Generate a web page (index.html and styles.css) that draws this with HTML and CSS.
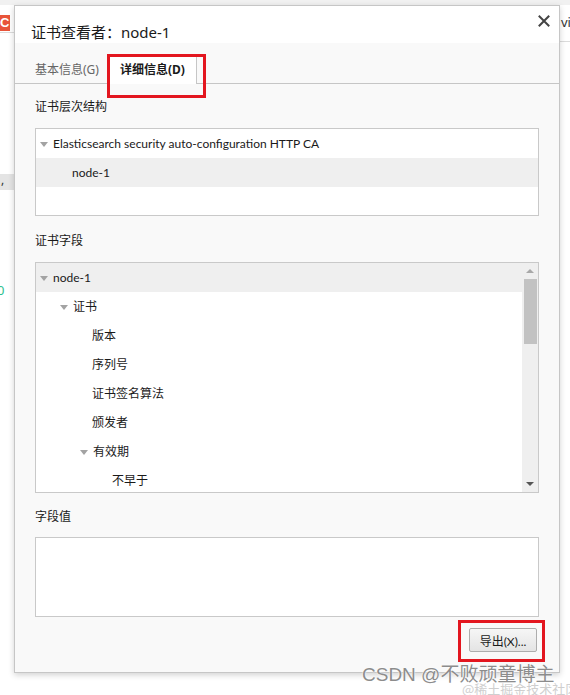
FILE: index.html
```html
<!DOCTYPE html>
<html lang="zh">
<head>
<meta charset="utf-8">
<title>证书查看者</title>
<link rel="stylesheet" href="styles.css">
</head>
<body>
<div class="backdrop">
  <div class="bg-top"></div>
  <div class="bg-logo">C</div>
  <div class="bg-line-left"></div>
  <div class="bg-line-right"></div>
  <div class="bg-vir">vir</div>
  <div class="bg-bar">,</div>
  <div class="bg-green">0</div>
</div>

<div class="dialog">
  <div class="header">
    <div class="title">证书查看者：node-1</div>
    <button class="close" aria-label="关闭">
      <svg width="12" height="12" viewBox="0 0 12 12"><path d="M1.5 1.5 L10.5 10.5 M10.5 1.5 L1.5 10.5" stroke="#444" stroke-width="2" stroke-linecap="square"/></svg>
    </button>
  </div>
  <div class="tabs">
    <div class="tab">基本信息(G)</div>
    <div class="tab active">详细信息(D)</div>
  </div>
  <div class="body">
    <div class="label">证书层次结构</div>
    <div class="box hierarchy">
      <div class="row"><span class="tri"></span>Elasticsearch security auto-configuration HTTP CA</div>
      <div class="row sel indent1">node-1</div>
    </div>

    <div class="label gap">证书字段</div>
    <div class="box fields">
      <div class="list">
        <div class="row sel"><span class="tri"></span>node-1</div>
        <div class="row l1"><span class="tri"></span>证书</div>
        <div class="row l2">版本</div>
        <div class="row l2">序列号</div>
        <div class="row l2">证书签名算法</div>
        <div class="row l2">颁发者</div>
        <div class="row l1b"><span class="tri"></span>有效期</div>
        <div class="row l3">不早于</div>
      </div>
      <div class="scrollbar">
        <span class="arrow up"></span>
        <span class="thumb"></span>
        <span class="arrow down"></span>
      </div>
    </div>

    <div class="label gap gap-sm">字段值</div>
    <div class="box value"></div>

    <div class="footer">
      <button class="btn">导出(X)...</button>
    </div>
  </div>
</div>

<div class="mark mark-tab"></div>
<div class="mark mark-btn"></div>

<div class="watermark">
  <span class="wm-sub">@稀土掘金技术社区</span>
  <span class="wm-main">CSDN @不败顽童博主</span>
</div>
</body>
</html>
```

FILE: styles.css
```css
* { box-sizing: border-box; }
html, body {
  margin: 0;
  padding: 0;
  width: 570px;
  height: 695px;
  overflow: hidden;
  background: #ffffff;
  font-family: "Lato", "Noto Sans CJK SC", sans-serif;
  color: #1a1a1a;
}

/* background page fragments */
.backdrop { position: absolute; inset: 0; }
.bg-top { position: absolute; left: 0; top: 0; width: 570px; height: 5px; background: #f1f1f1; }
.bg-logo {
  position: absolute; left: 0; top: 15px; width: 10px; height: 16px;
  background: #e8543a; color: #fff; font: bold 13px/16px "Liberation Sans", sans-serif;
  overflow: hidden;
}
.bg-line-left { position: absolute; left: 0; top: 32px; width: 14px; height: 1px; background: #dcdcdc; }
.bg-line-right { position: absolute; left: 560px; top: 41px; width: 10px; height: 1px; background: #dcdcdc; }
.bg-vir { position: absolute; left: 561px; top: 14px; font: 13px/16px "Noto Sans", sans-serif; color: #333; }
.bg-bar {
  position: absolute; left: 0; top: 174px; width: 14px; height: 16px; background: #e4e4e4;
  font: 12px/12px "Noto Sans", sans-serif; color: #333; padding-left: 1px;
}
.bg-green { position: absolute; left: -3px; top: 282px; font: 13px/16px "Noto Sans", sans-serif; color: #2fbf8f; }

/* dialog window */
.dialog {
  position: absolute;
  left: 14px;
  top: 5px;
  width: 546px;
  height: 668px;
  border: 1px solid #c6c6c6;
  background: #f9f9f9;
  box-shadow: 0 2px 6px rgba(0,0,0,0.18);
  display: flex;
  flex-direction: column;
}
.header {
  height: 37px;
  background: #ffffff;
  position: relative;
  display: flex;
  align-items: flex-end;
  padding-left: 16px;
  padding-bottom: 1px;
}
.title {
  font-family: "Noto Sans", "Noto Sans CJK SC", sans-serif;
  font-size: 15px;
  line-height: 20px;
  color: #1a1a1a;
}
.close {
  position: absolute;
  right: 9px;
  top: 9px;
  border: 0; background: transparent; padding: 0; width: 12px; height: 12px;
  display: flex; align-items: center; justify-content: center;
}

.tabs {
  height: 41px;
  border-bottom: 1px solid #c6c6c6;
  display: flex;
  align-items: flex-end;
  padding-left: 20px;
}
.tab {
  font-family: "Noto Sans", "Noto Sans CJK SC", sans-serif;
  font-size: 12px;
  color: #666;
  height: 28px;
  line-height: 28px;
  margin-bottom: -1px;
  margin-right: 9px;
}
.tab.active {
  background: #ffffff;
  border: 1px solid #c6c6c6;
  border-bottom: 0;
  color: #1a1a1a;
  font-weight: bold;
  padding: 0 11px 0 11px;
  height: 29px;
  margin-right: 0;
}

.body {
  flex: 1;
  padding: 13px 0 0 20px;
  display: flex;
  flex-direction: column;
}
.label {
  font-size: 12px;
  line-height: 20px;
  height: 20px;
  margin-bottom: 11px;
  color: #1a1a1a;
}
.label.gap { margin-top: 15px; }
.label.gap-sm { margin-top: 14px; margin-bottom: 10px; }

.box {
  width: 504px;
  background: #ffffff;
  border: 1px solid #c9c9c9;
}
.hierarchy { height: 88px; }
.fields { height: 231px; display: flex; }
.value { height: 80px; }

.row {
  height: 29px;
  line-height: 29px;
  font-size: 12px;
  color: #1a1a1a;
  padding-left: 4px;
  display: flex;
  align-items: center;
  white-space: nowrap;
}
.row.sel { background: #efefef; }
.indent1 { padding-left: 36px; }
.list { flex: 1; }
.l1 { padding-left: 24px; }
.l1b { padding-left: 44px; }
.l2 { padding-left: 56px; }
.l3 { padding-left: 76px; }
.tri {
  width: 0; height: 0;
  border-left: 4px solid transparent;
  border-right: 4px solid transparent;
  border-top: 5px solid #a3a3a3;
  margin-right: 5px;
  margin-top: 1px;
}

.scrollbar {
  width: 16px;
  background: #efefef;
  display: flex;
  flex-direction: column;
  align-items: center;
}
.arrow { width: 0; height: 0; border-left: 4px solid transparent; border-right: 4px solid transparent; }
.arrow.up { border-bottom: 4px solid #a8a8a8; margin-top: 6px; }
.arrow.down { border-top: 4px solid #555; margin-top: auto; margin-bottom: 6px; }
.thumb { width: 13px; height: 65px; background: #c2c2c2; margin-top: 6px; }

.footer {
  display: flex;
  justify-content: flex-end;
  width: 504px;
  margin-top: 11px;
}
.btn {
  width: 68px;
  height: 24px;
  margin-right: 2px;
  border: 1px solid #adadad;
  border-radius: 2px;
  background: linear-gradient(#f6f6f6, #e4e4e4);
  font-family: "Lato", "Noto Sans CJK SC", sans-serif;
  font-size: 12px;
  color: #1a1a1a;
  padding: 0;
}

/* red annotation boxes */
.mark { position: absolute; border: 3px solid #e3161f; }
.mark-tab { left: 107px; top: 54px; width: 99px; height: 44px; }
.mark-btn { left: 458px; top: 620px; width: 87px; height: 42px; }

.watermark { position: absolute; left: 0; top: 0; }
.wm-sub {
  position: absolute; left: 462px; top: 682px; white-space: nowrap;
  font: 13px/14px "Noto Sans CJK SC", sans-serif; color: #cfcfcf;
}
.wm-main {
  position: absolute; left: 362px; top: 664px; white-space: nowrap;
  font: 19px/22px "Liberation Sans", "Noto Sans CJK SC", sans-serif; color: #8c8c8c;
  text-shadow: 0 0 1px #fff, 0 0 2px #fff;
}
```
